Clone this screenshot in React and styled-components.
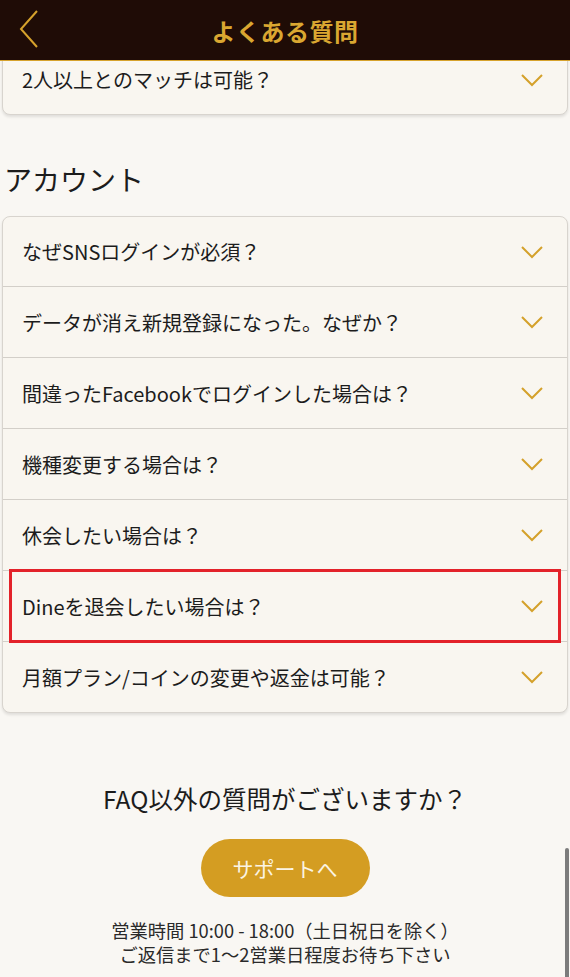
import React from "react";
import styled, { createGlobalStyle } from "styled-components";

const Global = createGlobalStyle`
  html, body { margin: 0; padding: 0; background: #f9f7f3; }
  body { font-family: "Noto Sans CJK JP", "Noto Sans", sans-serif; color: #1c1c1c; }
  * { box-sizing: border-box; }
`;

const Page = styled.div`
  width: 570px;
  height: 977px;
  overflow: hidden;
  position: relative;
  background: #f9f7f3;
`;

const Header = styled.header`
  position: sticky;
  top: 0;
  z-index: 2;
  height: 61px;
  background: #1f0c06;
  border-bottom: 1px solid #d6a22c;
  display: flex;
  align-items: center;
  justify-content: center;
`;

const BackButton = styled.button`
  position: absolute;
  left: 14px;
  top: 6px;
  width: 30px;
  height: 46px;
  padding: 0;
  border: 0;
  background: none;
  display: flex;
  align-items: center;
  justify-content: center;
`;

const Title = styled.h1`
  margin: 0;
  font-size: 24px;
  font-weight: 700;
  color: #daa731;
  letter-spacing: 0.5px;
`;

const Content = styled.main`
  margin-top: -17px;
  display: flex;
  flex-direction: column;
  position: relative;
  z-index: 1;
`;

const Card = styled.div`
  margin: 0 2px;
  background: #f9f6f0;
  border: 1px solid #d8d4ce;
  border-radius: 8px;
  box-shadow: 0 2px 3px rgba(0, 0, 0, 0.1);
  display: flex;
  flex-direction: column;
`;

const Row = styled.div`
  position: relative;
  height: 69px;
  display: flex;
  align-items: center;
  justify-content: space-between;
  padding: 0 23px 0 19px;
  font-size: 20px;
  color: #1c1c1c;
  & + & {
    border-top: 1px solid #d3cfc9;
    height: 71px;
  }
  ${(p) =>
    p.$highlighted &&
    `
    &::after {
      content: "";
      position: absolute;
      z-index: 1;
      left: 6px;
      right: 6px;
      top: -2px;
      bottom: -2px;
      border: 3px solid #e3222a;
      pointer-events: none;
    }
  `}
`;

const SectionTitle = styled.h2`
  margin: 44px 0 17px 4px;
  font-size: 28px;
  line-height: 40px;
  font-weight: 400;
  color: #1c1c1c;
`;

const Footer = styled.section`
  margin-top: 69px;
  display: flex;
  flex-direction: column;
  align-items: center;
`;

const Question = styled.p`
  margin: 0;
  font-size: 24.5px;
  line-height: 34px;
  color: #1c1c1c;
`;

const SupportButton = styled.button`
  margin-top: 23px;
  width: 169px;
  height: 58px;
  border: 0;
  border-radius: 29px;
  background: #d49d22;
  color: #fbf4e4;
  font-family: inherit;
  font-size: 21px;
`;

const Hours = styled.p`
  margin: 21px 0 0;
  font-size: 18.3px;
  line-height: 24px;
  text-align: center;
  color: #2a2a2a;
`;

const Scrollbar = styled.div`
  position: absolute;
  right: 1px;
  top: 848px;
  width: 4px;
  height: 140px;
  border-radius: 2px;
  background: #7c7c7c;
  z-index: 3;
`;

const Chevron = () => (
  <svg width="24" height="14" viewBox="0 0 24 14" fill="none">
    <polyline points="2,2 12,12 22,2" stroke="#d4a12b" strokeWidth="2" strokeLinejoin="miter" />
  </svg>
);

const BackIcon = () => (
  <svg width="20" height="38" viewBox="0 0 20 38" fill="none">
    <polyline points="18,1 2,19 18,37" stroke="#d6a22c" strokeWidth="2" />
  </svg>
);

const account = [
  "なぜSNSログインが必須？",
  "データが消え新規登録になった。なぜか？",
  "間違ったFacebookでログインした場合は？",
  "機種変更する場合は？",
  "休会したい場合は？",
  "Dineを退会したい場合は？",
  "月額プラン/コインの変更や返金は可能？",
];

export default function App() {
  return (
    <>
      <Global />
      <Page>
        <Header>
          <BackButton aria-label="戻る">
            <BackIcon />
          </BackButton>
          <Title>よくある質問</Title>
        </Header>
        <Content>
          <Card>
            <Row>
              <span>2人以上とのマッチは可能？</span>
              <Chevron />
            </Row>
          </Card>
          <SectionTitle>アカウント</SectionTitle>
          <Card>
            {account.map((q) => (
              <Row key={q} $highlighted={q.startsWith("Dine")}>
                <span>{q}</span>
                <Chevron />
              </Row>
            ))}
          </Card>
          <Footer>
            <Question>FAQ以外の質問がございますか？</Question>
            <SupportButton>サポートへ</SupportButton>
            <Hours>
              営業時間 10:00 - 18:00（土日祝日を除く）
              <br />
              ご返信まで1〜2営業日程度お待ち下さい
            </Hours>
          </Footer>
        </Content>
        <Scrollbar />
      </Page>
    </>
  );
}
